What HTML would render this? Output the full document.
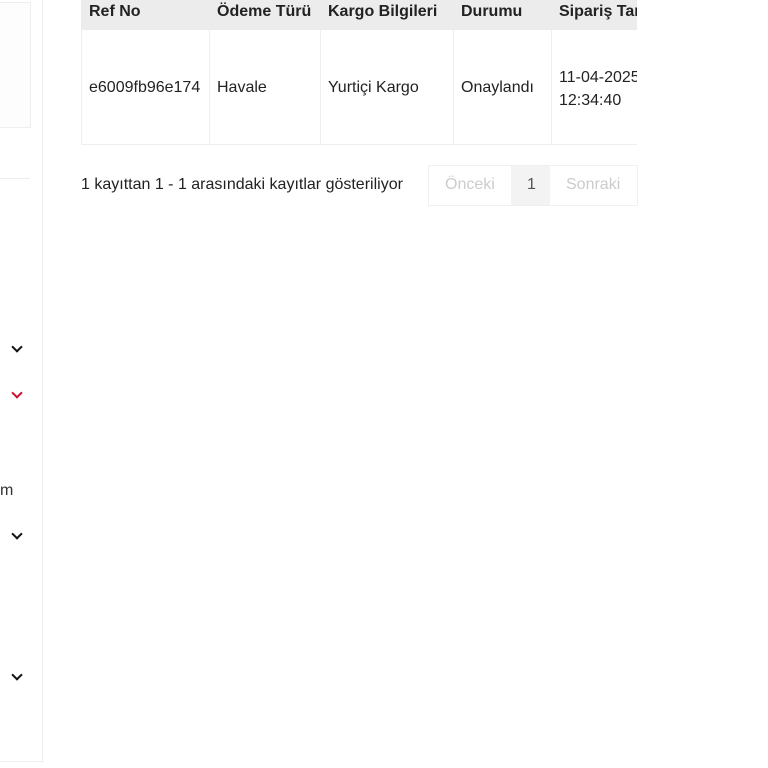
<!DOCTYPE html><html><head><style>
body{margin:0;width:768px;height:768px;background:#fff;font-family:"Liberation Sans",sans-serif;color:#222;position:relative;overflow:hidden}
.a{position:absolute}
.chev{position:absolute;width:6px;height:6px;border-right:2.5px solid #111;border-bottom:2.5px solid #111;transform:rotate(45deg)}
.h{font-weight:bold;font-size:16px;white-space:nowrap;top:3px}
.c{font-size:16px;white-space:nowrap}
</style></head><body>
<div class="a" style="left:-1px;top:0;width:43px;height:761px;border-right:1px solid #eee;border-bottom:1px solid #eee"></div>
<div class="a" style="left:-1px;top:2px;width:31px;height:124px;border:1px solid #eee;border-left:none;background:#fdfdfd"></div>
<div class="a" style="left:0;top:178px;width:30px;height:1px;background:#eee"></div>
<div class="chev" style="left:13px;top:343px"></div>
<div class="chev" style="left:13px;top:389px;border-color:#c8102e"></div>
<div class="a" style="left:0;top:482px;font-size:16px;color:#333">m</div>
<div class="chev" style="left:13px;top:530px"></div>
<div class="chev" style="left:13px;top:671px"></div>
<div class="a" style="left:81px;top:0;width:556px;height:146px;overflow:hidden">
<div class="a" style="left:0;top:0;width:556px;height:30px;background:#ececec"></div>
<div class="a" style="left:0;top:30px;width:556px;height:114px;border-left:1px solid #eee;border-bottom:1px solid #eee"></div>
<div class="a" style="left:128px;top:30px;width:1px;height:115px;background:#eee"></div>
<div class="a" style="left:239px;top:30px;width:1px;height:115px;background:#eee"></div>
<div class="a" style="left:372px;top:30px;width:1px;height:115px;background:#eee"></div>
<div class="a" style="left:470px;top:30px;width:1px;height:115px;background:#eee"></div>
<div class="a h" style="left:8px">Ref No</div>
<div class="a h" style="left:136px">Ödeme Türü</div>
<div class="a h" style="left:247px">Kargo Bilgileri</div>
<div class="a h" style="left:380px">Durumu</div>
<div class="a h" style="left:478px">Sipariş Tarihi</div>
<div class="a c" style="left:8px;top:79px">e6009fb96e174</div>
<div class="a c" style="left:136px;top:79px">Havale</div>
<div class="a c" style="left:247px;top:79px">Yurtiçi Kargo</div>
<div class="a c" style="left:380px;top:79px">Onaylandı</div>
<div class="a c" style="left:478px;top:66px;line-height:23px">11-04-2025<br>12:34:40</div>
</div>
<div class="a c" style="left:81px;top:176px">1 kayıttan 1 - 1 arasındaki kayıtlar gösteriliyor</div>
<div class="a" style="left:428px;top:165px;width:208px;height:39px;border:1px solid #f0f0f0"></div>
<div class="a" style="left:511px;top:166px;width:39px;height:39px;background:#f3f3f3"></div>
<div class="a c" style="left:445px;top:176px;color:#ccc">Önceki</div>
<div class="a c" style="left:527px;top:176px;color:#555">1</div>
<div class="a c" style="left:566px;top:176px;color:#ccc">Sonraki</div>
</body></html>
